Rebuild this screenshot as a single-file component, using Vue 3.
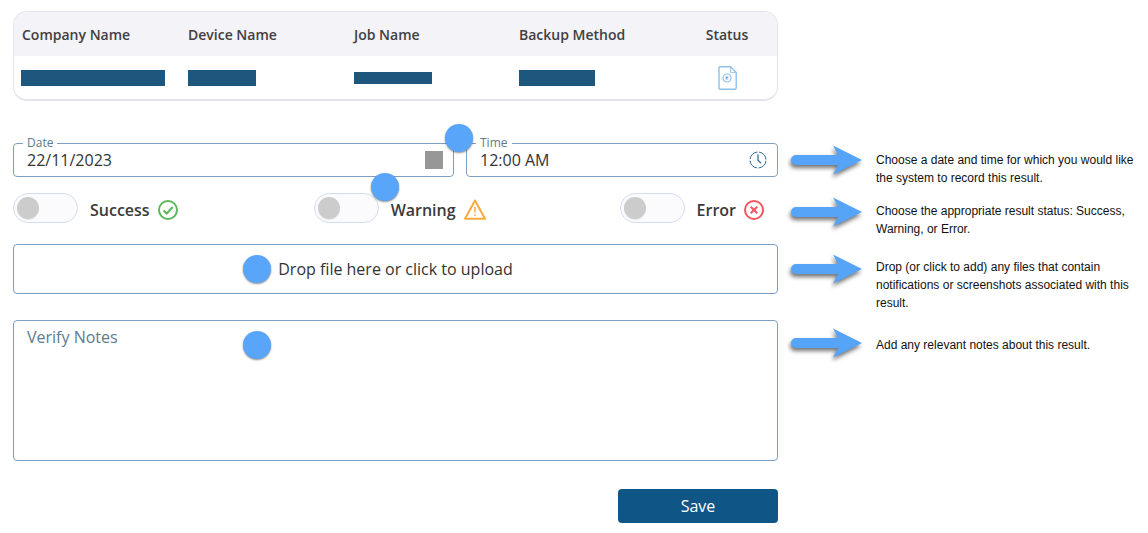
<script setup>
const columns = [
  { label: 'Company Name', bar: 'bar-company' },
  { label: 'Device Name', bar: 'bar-device' },
  { label: 'Job Name', bar: 'bar-job' },
  { label: 'Backup Method', bar: 'bar-method' },
]
const notes = [
  { cls: 'note-a', text: 'Choose a date and time for which you would like the system to record this result.' },
  { cls: 'note-b', text: 'Choose the appropriate result status: Success, Warning, or Error.' },
  { cls: 'note-c', text: 'Drop (or click to add) any files that contain notifications or screenshots associated with this result.' },
  { cls: 'note-d', text: 'Add any relevant notes about this result.' },
]
</script>

<template>
  <div class="page">
    <main class="form">
      <section class="table">
        <div class="row head">
          <div v-for="c in columns" :key="c.label" class="cell">{{ c.label }}</div>
          <div class="cell center">Status</div>
        </div>
        <div class="row body">
          <div v-for="c in columns" :key="c.bar" class="cell">
            <span class="bar" :class="c.bar"></span>
          </div>
          <div class="cell center">
            <svg class="doc" width="19" height="24" viewBox="0 0 19 24" fill="none" stroke="#8fc0e8" stroke-width="1.400">
              <path d="M2 .8h10.500l5.700 5.700v15.700a1 1 0 0 1-1 1H2a1 1 0 0 1-1-1V1.800a1 1 0 0 1 1-1z" />
              <path d="M12.500 .8v5.700h5.700" stroke-width="0.8" />
              <circle cx="9" cy="12" r="4" stroke-width="1.200" />
              <path d="M7.700 10.700l2.600 2.600M10.300 10.700l-2.600 2.600" stroke="#6b9ec8" stroke-width="1.100" />
            </svg>
          </div>
        </div>
      </section>

      <div class="datetime">
        <fieldset class="field date">
          <legend>Date</legend>
          <span class="value">22/11/2023</span>
          <span class="square"></span>
        </fieldset>
        <fieldset class="field time">
          <legend>Time</legend>
          <span class="value">12:00 AM</span>
          <svg width="18" height="18" viewBox="0 0 18 18" fill="none" stroke="#2f6d99" stroke-width="1">
            <circle cx="9" cy="9" r="8" stroke-dasharray="11 1.570" stroke-dashoffset="-0.800" />
            <path d="M9 3.500V9.300L12 12.300" stroke-width="1.300" />
          </svg>
        </fieldset>
      </div>

      <div class="statuses">
        <div class="status status-first">
          <span class="switch"><span class="knob"></span></span>
          <span class="status-label">Success</span>
          <svg width="20" height="20" viewBox="0 0 20 20" fill="none" stroke="#5cb85c" stroke-width="2">
            <circle cx="10" cy="10" r="9" />
            <path d="M5.500 10.500l3.200 3 6-6.500" />
          </svg>
        </div>
        <div class="status">
          <span class="switch"><span class="knob"></span></span>
          <span class="status-label">Warning</span>
          <svg width="22" height="21" viewBox="0 0 22 21" fill="none" stroke="#f7ab3e" stroke-width="2" stroke-linejoin="round">
            <path d="M11 1.500L21 19.800H1z" />
            <path d="M11 8v5.500M11 15.200v1.500" stroke-width="1.500" />
          </svg>
        </div>
        <div class="status">
          <span class="switch"><span class="knob"></span></span>
          <span class="status-label">Error</span>
          <svg width="20" height="20" viewBox="0 0 20 20" fill="none" stroke="#f5555f" stroke-width="2">
            <circle cx="10" cy="10" r="9" />
            <path d="M6.700 6.700l6.600 6.600M13.300 6.700l-6.600 6.600" />
          </svg>
        </div>
      </div>

      <div class="dropzone">Drop file here or click to upload</div>
      <div class="notes-box">Verify Notes</div>

      <div class="actions">
        <button class="save" type="button">Save</button>
      </div>
    </main>

    <aside class="notes">
      <div v-for="n in notes" :key="n.cls" class="note" :class="n.cls">
        <svg class="arrow" width="72" height="32" viewBox="0 0 72 32">
          <path d="M5 11H47L42 1.500L71 16L42 30.500L47 21H5a5 5 0 0 1 0-10z" fill="#55a4f7" />
        </svg>
        <p>{{ n.text }}</p>
      </div>
    </aside>

    <span class="dot dot-a"></span>
    <span class="dot dot-b"></span>
    <span class="dot dot-c"></span>
    <span class="dot dot-d"></span>
  </div>
</template>

<style scoped>
.page {
  position: relative;
  display: flex;
  width: 1148px;
  height: 533px;
  overflow: hidden;
  background: #fff;
  font-family: "Open Sans", sans-serif;
  color: #333;
}
.form {
  width: 765px;
  margin: 11px 0 0 13px;
  display: flex;
  flex-direction: column;
}
.table {
  height: 90px;
  box-sizing: border-box;
  border: 1px solid #e4e4ee;
  border-bottom-width: 2px;
  border-radius: 14px;
  overflow: hidden;
}
.row {
  display: grid;
  grid-template-columns: 167px 166px 165px 173px 70px;
  padding-left: 7px;
  align-items: center;
}
.head {
  height: 44px;
  background: #f3f3f8;
  color: #404040;
  font-size: 14px;
  font-weight: 600;
}
.head .cell:first-child {
  padding-left: 1px;
}
.body {
  height: 43px;
}
.cell {
  display: flex;
  align-items: center;
}
.center {
  justify-content: center;
}
.bar {
  display: block;
  height: 16px;
  background: #1e577d;
}
.bar-company { width: 144px; }
.bar-device { width: 68px; }
.bar-job { width: 78px; height: 12px; }
.bar-method { width: 76px; }
.doc {
  margin-top: 1px;
}
.datetime {
  display: flex;
  gap: 12px;
  margin-top: 34px;
}
.field {
  margin: 0;
  padding: 0 10px 8px 13px;
  height: 42px;
  box-sizing: border-box;
  border: 1px solid #7f9fc2;
  border-radius: 4px;
  display: flex;
  align-items: center;
  justify-content: space-between;
  min-width: 0;
}
.field legend {
  margin-left: -4px;
  padding: 0 4px;
  font-size: 12px;
  line-height: 16px;
  color: #5d7b8e;
}
.date {
  width: 441px;
}
.time {
  width: 312px;
}
.value {
  font-size: 16px;
  line-height: 18px;
}
.square {
  width: 18px;
  height: 18px;
  background: #979797;
}
.statuses {
  display: flex;
  justify-content: space-between;
  padding-right: 14px;
  margin-top: 16px;
}
.status {
  display: flex;
  align-items: center;
}
.status-first {
  padding-right: 2px;
}
.status svg {
  margin-top: 3px;
}
.switch {
  width: 65px;
  height: 30px;
  box-sizing: border-box;
  border: 1px solid #d2deed;
  border-radius: 15px;
  background: #fbfbfd;
  display: flex;
  align-items: center;
  padding-left: 3px;
}
.knob {
  width: 22px;
  height: 22px;
  border-radius: 50%;
  background: #ccc;
  box-shadow: 0 1px 1px rgba(0, 0, 0, 0.08);
}
.status-label {
  margin: 0 8px 0 12px;
  padding-top: 4px;
  color: #3a3a3a;
  font-size: 16px;
  font-weight: 600;
}
.dropzone {
  margin-top: 21px;
  height: 50px;
  box-sizing: border-box;
  border: 1px solid #7f9fc2;
  border-radius: 4px;
  display: flex;
  align-items: center;
  justify-content: center;
  font-size: 16px;
}
.notes-box {
  margin-top: 26px;
  height: 141px;
  box-sizing: border-box;
  border: 1px solid #7f9fc2;
  border-radius: 4px;
  padding: 5px 13px;
  font-size: 16px;
  line-height: 22px;
  color: #5d7b8e;
}
.actions {
  display: flex;
  justify-content: flex-end;
  margin-top: 28px;
}
.save {
  width: 160px;
  height: 34px;
  border: 0;
  border-radius: 4px;
  background: #0f5585;
  color: #fff;
  font-family: inherit;
  font-size: 16px;
}
.notes {
  flex: 1;
  margin: 151px 0 0 13px;
  display: flex;
  flex-direction: column;
}
.note {
  display: flex;
  align-items: flex-start;
  gap: 13px;
}
.note p {
  flex: none;
  width: 262px;
  margin: 0;
  font-family: "Liberation Sans", Arial, sans-serif;
  font-size: 12px;
  line-height: 18px;
  color: #111;
}
.arrow {
  flex: none;
  overflow: visible;
  filter: drop-shadow(-1px 3px 2px rgba(0, 0, 0, 0.55));
}
.note-a .arrow { margin-top: -7px; }
.note-b { margin-top: 15px; }
.note-b .arrow { margin-top: -6px; }
.note-c { margin-top: 20px; }
.note-c .arrow { margin-top: -5px; }
.note-d { margin-top: 24px; }
.note-d .arrow { margin-top: -9px; }
.dot {
  position: absolute;
  width: 28px;
  height: 28px;
  border-radius: 50%;
  background: #59a5fa;
  box-shadow: 0 1px 2px rgba(0, 0, 0, 0.45);
}
.dot-a { left: 445px; top: 124px; }
.dot-b { left: 371px; top: 173px; }
.dot-c { left: 243px; top: 255px; }
.dot-d { left: 243px; top: 331px; }
</style>
